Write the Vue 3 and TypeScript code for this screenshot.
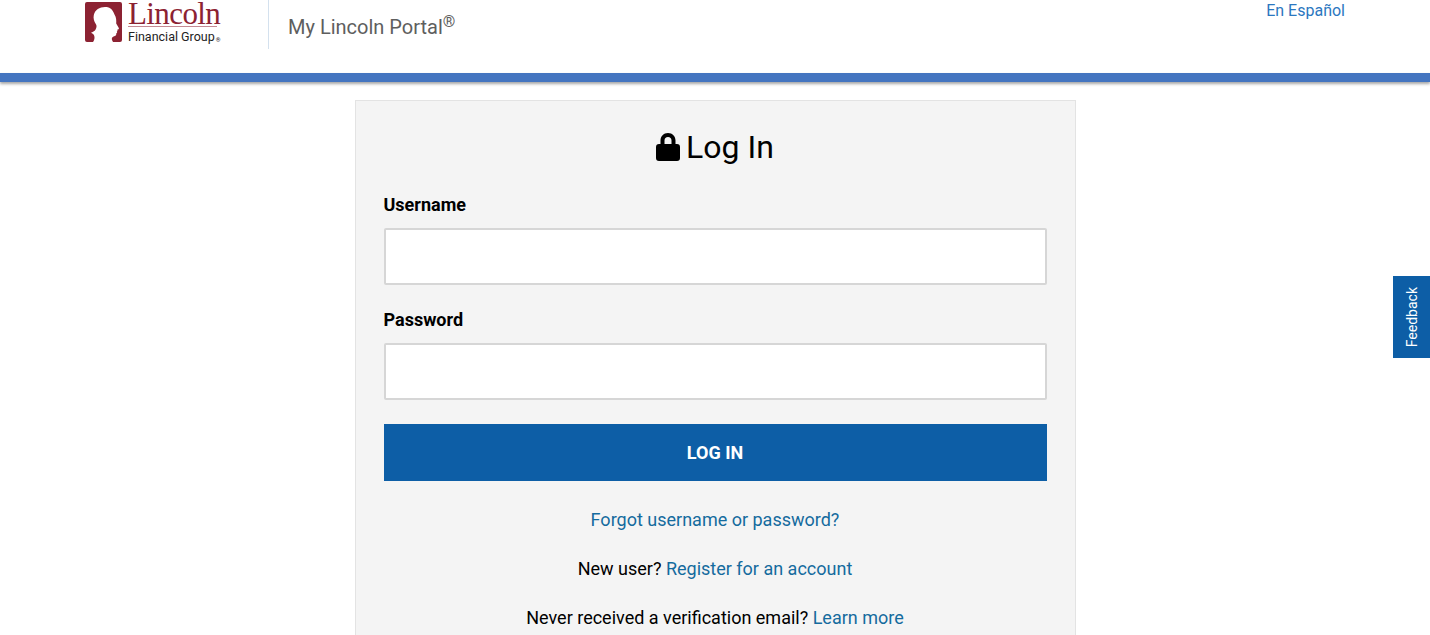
<script setup lang="ts">
const username = ''
const password = ''
</script>

<template>
  <div class="page">
    <header class="top">
      <div class="brand">
        <div class="logo">
          <svg class="logo-mark" width="38" height="43" viewBox="0 0 38 43" aria-hidden="true">
            <path
              fill="#8c2232"
              d="M2 1h33a2 2 0 0 1 2 2v36a2 2 0 0 1-2 2h-7l-1-2c-.6-1.6.3-3 1.6-3.4 2-.5 3-1.400 2.600-3 1-.6 1.200-1.300.6-2 .8-.5.900-1.200.4-1.900 1.200-.1 2-.8 1.600-1.700l-2.600-4.500c.2-3 .1-6-1.600-8.700C27.500 7.600 24 6 20 6c-5.500 0-10 2.800-11.200 8-.7 3.300.3 6.500 2 9 1.200 1.800.8 3.600-.2 5.400-1 1.800-3.100 2.400-4.600 3.300 1.900.7 3.300 2.200 3.500 4.300.1 2-.5 3.700-1.500 5H2a2 2 0 0 1-2-2V3a2 2 0 0 1 2-2z"
            />
          </svg>
          <div class="logo-text">
            <div class="logo-name">Lincoln</div>
            <div class="logo-sub">Financial Group<span class="logo-reg">®</span></div>
          </div>
        </div>
        <div class="portal">My Lincoln Portal<sup>®</sup></div>
      </div>
      <a class="lang" href="#">En Español</a>
    </header>
    <div class="rule"></div>

    <main class="card">
      <h1 class="title">
        <svg width="24" height="28" viewBox="0 0 24 28" aria-hidden="true">
          <path
            fill="#000"
            fill-rule="evenodd"
            d="M12 0c4.400 0 7.500 3.200 7.500 7.500V11H21a3 3 0 0 1 3 3v11a3 3 0 0 1-3 3H3a3 3 0 0 1-3-3V14a3 3 0 0 1 3-3h1.500V7.500C4.500 3.200 7.600 0 12 0zm0 4C9.800 4 8.500 5.400 8.500 7.500V11h7V7.500C15.500 5.400 14.200 4 12 4z"
          />
        </svg>
        <span>Log In</span>
      </h1>

      <label class="label" for="username">Username</label>
      <input id="username" class="field" type="text" :value="username" />

      <label class="label label--second" for="password">Password</label>
      <input id="password" class="field" type="password" :value="password" />

      <button type="button" class="submit">LOG IN</button>

      <p class="line line--first"><a href="#">Forgot username or password?</a></p>
      <p class="line">New user? <a href="#">Register for an account</a></p>
      <p class="line">Never received a verification email? <a href="#">Learn more</a></p>
    </main>

    <button type="button" class="feedback"><span>Feedback</span></button>
  </div>
</template>

<style>
html,
body {
  margin: 0;
  height: 635px;
  overflow: hidden;
  background: #fff;
}
</style>

<style scoped>
.page {
  position: relative;
  height: 635px;
  overflow: hidden;
  font-family: Roboto, "Liberation Sans", sans-serif;
  color: #000;
}

.top {
  display: flex;
  justify-content: space-between;
  align-items: flex-start;
  height: 73px;
  padding: 0 85px 0 85px;
  box-sizing: border-box;
}

.brand {
  display: flex;
  align-items: flex-start;
}

.logo {
  display: flex;
  width: 183px;
  height: 49px;
  border-right: 1px solid #d4e1ee;
  box-sizing: content-box;
}

.logo-mark {
  margin-top: 1px;
}

.logo-text {
  margin-left: 5px;
}

.logo-name {
  height: 26px;
  width: 89px;
  border-bottom: 1px solid #c48a93;
  font-family: "Liberation Serif", serif;
  font-size: 31px;
  line-height: 27px;
  letter-spacing: -0.6px;
  color: #8c2232;
}

.logo-sub {
  margin-top: 2px;
  font-size: 12.5px;
  line-height: 16px;
  color: #222;
  white-space: nowrap;
}

.logo-reg {
  font-size: 6px;
  margin-left: 1px;
  vertical-align: -1px;
}

.portal {
  margin: 13px 0 0 19px;
  font-size: 20px;
  line-height: 28px;
  color: #5e5e5e;
  white-space: nowrap;
}

.portal sup {
  font-size: 16px;
  line-height: 0;
  vertical-align: 7px;
}

.lang {
  font-size: 16px;
  line-height: 22px;
  color: #2b77c0;
  text-decoration: none;
  white-space: nowrap;
}

.rule {
  height: 9px;
  background: #4475c0;
  box-shadow: 0 2px 3px rgb(0 0 0 / 0.35);
}

.card {
  width: 721px;
  box-sizing: border-box;
  margin: 18px auto 0;
  padding: 0 28px 40px;
  background: #f4f4f4;
  border: 1px solid #e3e3e3;
}

.title {
  display: flex;
  justify-content: center;
  align-items: center;
  gap: 6px;
  margin: 26px 0 0;
  height: 40px;
  font-size: 32px;
  font-weight: 400;
  line-height: 40px;
}

.title svg {
  margin-top: -1px;
}

.label {
  display: block;
  margin-top: 26px;
  font-size: 18px;
  font-weight: 700;
  line-height: 24px;
}

.label--second {
  margin-top: 23px;
}

.field {
  display: block;
  width: 100%;
  height: 57px;
  box-sizing: border-box;
  margin-top: 11px;
  background: #fff;
  border: 2px solid #d6d6d6;
  border-radius: 2px;
  outline: none;
}

.submit {
  display: block;
  width: 100%;
  height: 57px;
  margin-top: 24px;
  padding: 0;
  border: 0;
  background: #0d5ea6;
  color: #fff;
  font-family: inherit;
  font-size: 18px;
  font-weight: 700;
}

.line {
  margin: 25px 0 0;
  font-size: 18px;
  line-height: 24px;
  text-align: center;
}

.line--first {
  margin-top: 27px;
}

.line a {
  color: #146b9e;
  text-decoration: none;
}

.feedback {
  position: absolute;
  right: 0;
  top: 276px;
  display: flex;
  align-items: center;
  justify-content: center;
  width: 37px;
  height: 82px;
  padding: 0;
  border: 0;
  background: #0d5ea6;
  color: #fff;
  font-family: inherit;
  font-size: 14px;
}

.feedback span {
  writing-mode: vertical-rl;
  transform: rotate(180deg);
}
</style>
